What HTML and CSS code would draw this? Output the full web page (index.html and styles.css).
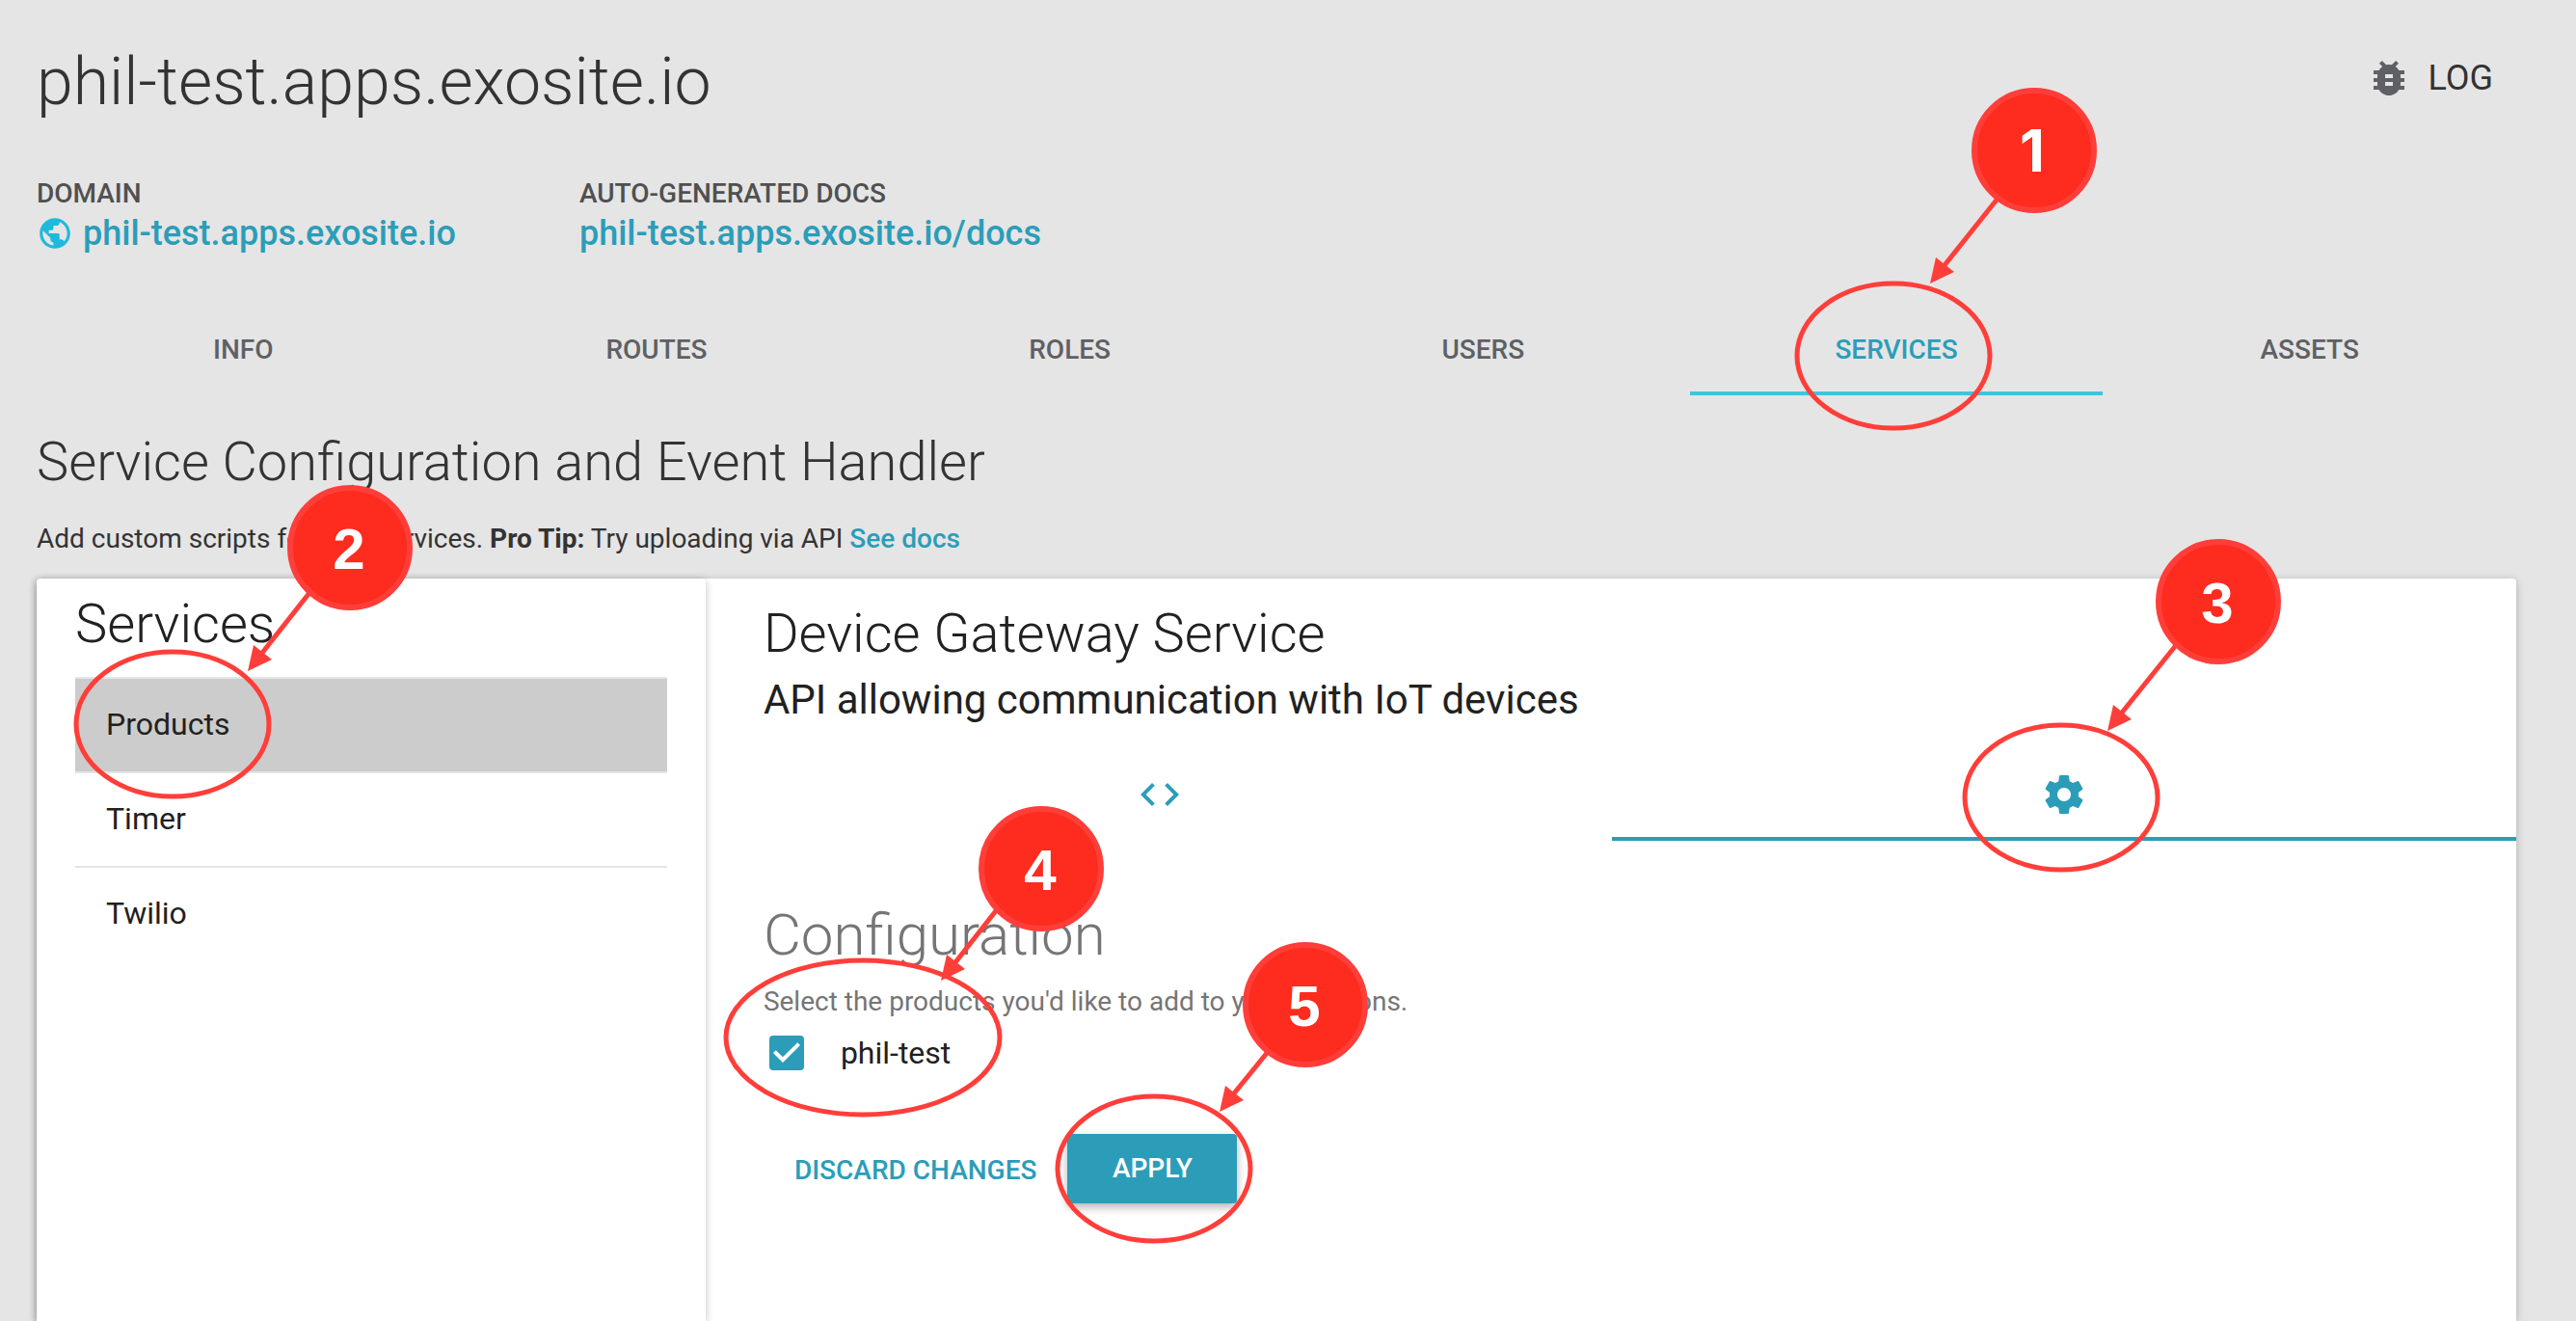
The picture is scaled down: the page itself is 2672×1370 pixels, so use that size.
FILE: index.html
```html
<!DOCTYPE html>
<html lang="en">
<head>
<meta charset="utf-8">
<title>phil-test.apps.exosite.io</title>
<link rel="stylesheet" href="styles.css">
</head>
<body>
<svg class="defs" width="0" height="0" aria-hidden="true">
  <defs>
    <path id="arrowhead" d="M0 0L6-27L25-12Z"/>
  </defs>
</svg>
<div class="page">
  <header class="header">
    <h1 class="title">phil-test.apps.exosite.io</h1>
    <button class="log" type="button">
      <svg class="icon" viewBox="0 0 24 24" aria-hidden="true"><path d="M20 8h-2.81c-.45-.78-1.07-1.45-1.82-1.96L17 4.41 15.59 3l-2.17 2.17C12.96 5.06 12.49 5 12 5s-.96.06-1.41.17L8.41 3 7 4.41l1.62 1.63C7.88 6.55 7.26 7.22 6.81 8H4v2h2.09c-.05.33-.09.66-.09 1v1H4v2h2v1c0 .34.04.67.09 1H4v2h2.81c1.04 1.79 2.97 3 5.19 3s4.15-1.21 5.19-3H20v-2h-2.09c.05-.33.09-.66.09-1v-1h2v-2h-2v-1c0-.34-.04-.67-.09-1H20V8zm-6 8h-4v-2h4v2zm0-4h-4v-2h4v2z"/></svg>
      LOG
    </button>
  </header>

  <section class="facts">
    <div>
      <h2 class="fact-label">DOMAIN</h2>
      <a class="fact-link" href="#domain">
        <svg class="globe" viewBox="0 0 24 24" aria-hidden="true"><path d="M12 2C6.48 2 2 6.48 2 12s4.48 10 10 10 10-4.48 10-10S17.52 2 12 2zm-1 17.93c-3.95-.49-7-3.85-7-7.93 0-.62.08-1.21.21-1.79L9 15v1c0 1.1.9 2 2 2v1.93zm6.9-2.54c-.26-.81-1-1.39-1.9-1.39h-1v-3c0-.55-.45-1-1-1H8v-2h2c.55 0 1-.45 1-1V7h2c1.1 0 2-.9 2-2v-.41c2.93 1.19 5 4.06 5 7.41 0 2.08-.8 3.97-2.1 5.39z"/></svg>
        phil-test.apps.exosite.io
      </a>
    </div>
    <div>
      <h2 class="fact-label">AUTO-GENERATED DOCS</h2>
      <a class="fact-link" href="#docs">phil-test.apps.exosite.io/docs</a>
    </div>
  </section>

  <nav>
    <ul class="tabs">
      <li class="tab"><a href="#info">INFO</a></li>
      <li class="tab"><a href="#routes">ROUTES</a></li>
      <li class="tab"><a href="#roles">ROLES</a></li>
      <li class="tab"><a href="#users">USERS</a></li>
      <li class="tab tab-active"><a href="#services">SERVICES</a>
        <svg class="callout" viewBox="-300 -280 600 400">
          <g transform="translate(-3 7)">
            <ellipse class="ring" rx="100" ry="75"/>
            <path class="shaft" d="M112-168L53-94"/>
            <use class="head" href="#arrowhead" x="38" y="-75"/>
            <circle class="badge" cx="146" cy="-213" r="62"/>
            <text class="number number-one" x="144" y="-191">1</text>
          </g>
        </svg>
      </li>
      <li class="tab"><a href="#assets">ASSETS</a></li>
    </ul>
  </nav>

  <h2 class="section-title">Service Configuration and Event Handler</h2>
  <p class="intro">Add custom scripts for your services. <strong>Pro Tip:</strong> Try uploading via API <a href="#see-docs">See docs</a></p>

  <main class="card">
    <aside class="sidebar">
      <h2 class="heading">Services</h2>
      <ul class="services">
        <li><a class="service selected" href="#products"><span class="anchor">Products
          <svg class="callout" viewBox="-300 -280 600 400">
            <g transform="translate(5 0)">
              <ellipse class="ring" rx="100" ry="75"/>
              <path class="shaft" d="M145-140L93-74"/>
              <use class="head" href="#arrowhead" x="78" y="-55"/>
              <circle class="badge" cx="184" cy="-183" r="62"/>
              <text class="number" x="183" y="-161">2</text>
            </g>
          </svg></span></a></li>
        <li><a class="service" href="#timer">Timer</a></li>
        <li><a class="service" href="#twilio">Twilio</a></li>
      </ul>
    </aside>

    <section class="detail">
      <div class="detail-head">
        <h2 class="heading">Device Gateway Service</h2>
        <p class="summary">API allowing communication with IoT devices</p>
      </div>
      <div class="modes">
        <button class="mode" type="button" aria-label="Script">
          <svg class="icon" viewBox="0 0 24 24" aria-hidden="true"><path d="M9.4 16.6L4.8 12l4.6-4.6L8 6l-6 6 6 6 1.4-1.4zm5.2 0l4.6-4.6-4.6-4.6L16 6l6 6-6 6-1.4-1.4z"/></svg>
        </button>
        <div class="mode-slot">
          <button class="mode mode-active" type="button" aria-label="Configuration">
            <svg class="icon" viewBox="0 0 24 24" aria-hidden="true"><path d="M19.43 12.98c.04-.32.07-.64.07-.98s-.03-.66-.07-.98l2.11-1.65c.19-.15.24-.42.12-.64l-2-3.46c-.12-.22-.39-.3-.61-.22l-2.49 1c-.52-.4-1.08-.73-1.69-.98l-.38-2.65C14.46 2.18 14.25 2 14 2h-4c-.25 0-.46.18-.49.42l-.38 2.65c-.61.25-1.17.59-1.69.98l-2.49-1c-.23-.09-.49 0-.61.22l-2 3.46c-.13.22-.07.49.12.64l2.11 1.65c-.04.32-.07.65-.07.98s.03.66.07.98l-2.11 1.65c-.19.15-.24.42-.12.64l2 3.46c.12.22.39.3.61.22l2.49-1c.52.4 1.08.73 1.69.98l.38 2.65c.03.24.24.42.49.42h4c.25 0 .46-.18.49-.42l.38-2.65c.61-.25 1.17-.59 1.69-.98l2.49 1c.23.09.49 0 .61-.22l2-3.46c.12-.22.07-.49-.12-.64l-2.11-1.65zM12 15.5c-1.93 0-3.5-1.57-3.5-3.5s1.57-3.5 3.5-3.5 3.5 1.57 3.5 3.5-1.57 3.5-3.5 3.5z"/></svg>
          </button>
          <svg class="callout" viewBox="-300 -280 600 400">
            <g transform="translate(-3 3)">
              <ellipse class="ring" rx="100" ry="75"/>
              <path class="shaft" d="M124-164L63-88"/>
              <use class="head" href="#arrowhead" x="48" y="-69"/>
              <circle class="badge" cx="163" cy="-203" r="62"/>
              <text class="number" x="162" y="-181">3</text>
            </g>
          </svg>
        </div>
      </div>

      <form class="config">
        <h3 class="config-title">Configuration</h3>
        <p class="hint">Select the products you'd like to add to your solutions.</p>
        <label class="option">
          <input class="check" type="checkbox" checked>
          phil-test
          <svg class="callout" viewBox="-300 -280 600 400">
            <g transform="translate(6 -16)">
              <ellipse class="ring" rx="142" ry="80"/>
              <path class="shaft" d="M144-139L96-78"/>
              <use class="head" href="#arrowhead" x="81" y="-59"/>
              <circle class="badge" cx="185" cy="-175" r="62"/>
              <text class="number" x="184" y="-153">4</text>
            </g>
          </svg>
        </label>
        <div class="actions">
          <button class="discard" type="reset">DISCARD CHANGES</button>
          <div class="anchor">
            <button class="apply" type="submit">APPLY</button>
            <svg class="callout" viewBox="-300 -280 600 400">
              <g transform="translate(2 0)">
                <ellipse class="ring" rx="100" ry="75"/>
                <path class="shaft" d="M122-126L83-78"/>
                <use class="head" href="#arrowhead" x="68" y="-59"/>
                <circle class="badge" cx="157" cy="-170" r="62"/>
                <text class="number" x="156" y="-148">5</text>
              </g>
            </svg>
          </div>
        </div>
      </form>
    </section>
  </main>
</div>
</body>
</html>
```
FILE: styles.css
```css
* {
  box-sizing: border-box;
}

body {
  margin: 0;
  background: #e5e5e5;
  color: #333;
  font-family: Roboto, "Liberation Sans", sans-serif;
  font-size: 28px;
  line-height: 40px;
}

h1, h2, h3, p, ul {
  margin: 0;
  padding: 0;
}

ul {
  list-style: none;
}

a {
  color: #2b9db9;
  font-weight: 500;
  text-decoration: none;
}

button {
  border: 0;
  padding: 0;
  background: none;
  color: inherit;
  font: inherit;
  cursor: pointer;
}

.defs {
  position: absolute;
}

.page {
  display: flex;
  flex-direction: column;
  min-height: 100vh;
  padding: 45px 62px 0 38px;
}

.icon {
  width: 48px;
  height: 48px;
  fill: currentColor;
}

/* Header */

.header {
  display: flex;
  justify-content: space-between;
  align-items: flex-start;
}

.title {
  font-size: 68px;
  font-weight: 300;
  line-height: 80px;
}

.log {
  display: flex;
  align-items: center;
  gap: 16px;
  height: 72px;
  padding-right: 24px;
  font-size: 36px;
}

.log .icon {
  fill: #5f6064;
}

.facts {
  display: flex;
  gap: 128px;
  margin-top: 56px;
}

.fact-label {
  color: #505050;
  font-size: 28px;
  font-weight: 500;
}

.fact-link {
  display: flex;
  align-items: center;
  gap: 10px;
  font-size: 36px;
  line-height: 42px;
}

.globe {
  width: 38px;
  height: 38px;
  fill: #1fbadb;
}

/* Solution tabs */

.tabs {
  display: grid;
  grid-template-columns: repeat(6, 1fr);
  margin-top: 51px;
}

.tab {
  position: relative;
}

.tab a {
  display: block;
  height: 96px;
  color: #5f6064;
  line-height: 98px;
  text-align: center;
}

.tab-active a {
  box-shadow: inset 0 -4px #40c4dd;
  color: #2b9db9;
}

.section-title {
  margin-top: 33px;
  font-size: 56px;
  font-weight: 300;
  line-height: 72px;
}

.intro {
  margin: 24px 0 21px;
}

/* Card */

.card {
  display: grid;
  flex: 1;
  grid-template-columns: 27fr 73fr;
  gap: 2px;
  border-radius: 4px 4px 0 0;
  background: #fff;
  box-shadow: 0 2px 8px rgba(0, 0, 0, 0.26);
  color: #212121;
}

.heading {
  font-size: 56px;
  font-weight: 300;
  line-height: 72px;
}

.sidebar {
  padding: 11px 40px 0;
  border-radius: 4px 4px 0 0;
  box-shadow: 0 2px 8px rgba(0, 0, 0, 0.26);
}

.services {
  margin-top: 19px;
  border-top: 2px solid #e5e5e5;
}

.services li + li {
  border-top: 2px solid #e5e5e5;
}

.service {
  display: block;
  height: 96px;
  padding: 0 32px;
  color: inherit;
  font-size: 32px;
  font-weight: 400;
  line-height: 94px;
}

.selected {
  background: #ccc;
}

.detail-head {
  padding: 21px 58px 0;
}

.summary {
  font-size: 42px;
  line-height: 66px;
}

.modes {
  display: grid;
  grid-template-columns: 1fr 1fr;
  margin-top: 17px;
}

.mode-slot {
  position: relative;
}

.mode {
  display: flex;
  justify-content: center;
  align-items: center;
  width: 100%;
  height: 96px;
  color: #2b9db9;
}

.mode-active {
  box-shadow: inset 0 -4px #2b9db9;
}

.config {
  padding: 58px 58px 0;
}

.config-title {
  color: #757575;
  font-size: 60px;
  font-weight: 300;
  line-height: 80px;
}

.hint {
  margin-top: 9px;
  color: #757575;
}

.option {
  position: relative;
  display: flex;
  align-items: center;
  gap: 38px;
  width: fit-content;
  height: 48px;
  margin-top: 9px;
  padding-left: 6px;
  font-size: 32px;
}

.check {
  appearance: none;
  width: 36px;
  height: 36px;
  margin: 0;
  border-radius: 4px;
  background: #2b9db9;
}

.check:checked {
  background: #2b9db9 url("data:image/svg+xml,%3Csvg xmlns='http://www.w3.org/2000/svg' viewBox='3 3 18 18'%3E%3Cpath fill='%23fff' d='M10 17l-5-5 1.410-1.410L10 14.170l7.590-7.590L19 8z'/%3E%3C/svg%3E") center / 100%;
}

.actions {
  display: flex;
  align-items: flex-start;
  margin-top: 60px;
}

.discard,
.apply {
  font-weight: 500;
}

.discard {
  height: 76px;
  padding: 0 32px;
  color: #2b9db9;
}

.apply {
  display: block;
  min-width: 176px;
  height: 72px;
  border-radius: 4px;
  background: #2b9db9;
  box-shadow: 0 4px 10px rgba(0, 0, 0, 0.3);
  color: #fff;
}

/* Numbered callouts over their targets */

.anchor {
  position: relative;
  display: inline-block;
}

.callout {
  position: absolute;
  top: 50%;
  left: 50%;
  z-index: 1;
  width: 600px;
  height: 400px;
  margin: -280px 0 0 -300px;
  pointer-events: none;
}

.ring,
.shaft {
  fill: none;
  stroke: #ff3e3a;
  stroke-width: 5px;
}

.head {
  fill: #ff3e3a;
}

.badge {
  fill: #fd2c1e;
  stroke: #ff3e3a;
  stroke-width: 6px;
}

.number {
  fill: #fff;
  font-family: "Liberation Sans", Arial, sans-serif;
  font-size: 60px;
  font-weight: 700;
  text-anchor: middle;
}

/* Inter draws the numeral one without a foot */
.number-one {
  font-family: Inter, sans-serif;
}
```
